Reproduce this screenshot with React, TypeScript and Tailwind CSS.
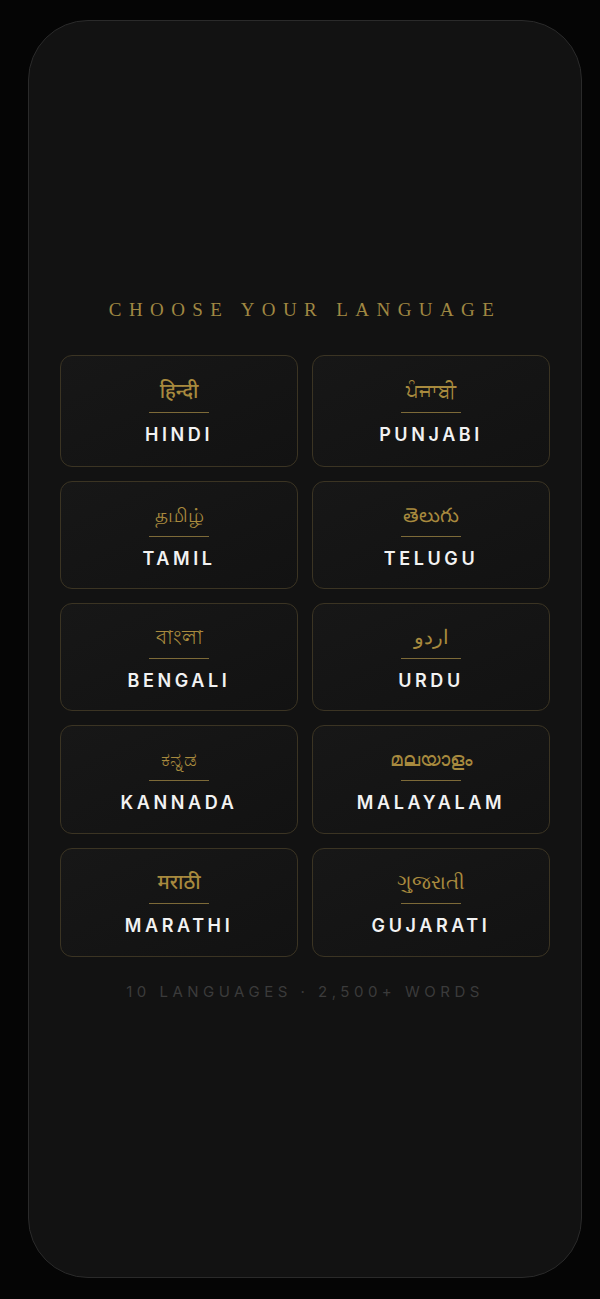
const LANGUAGES = [
  { native: "हिन्दी", name: "HINDI", h: "h-[112px]" },
  { native: "ਪੰਜਾਬੀ", name: "PUNJABI", h: "h-[112px]" },
  { native: "தமிழ்", name: "TAMIL", h: "h-[108px]" },
  { native: "తెలుగు", name: "TELUGU", h: "h-[108px]" },
  { native: "বাংলা", name: "BENGALI", h: "h-[108px]" },
  { native: "اردو", name: "URDU", h: "h-[108px]" },
  { native: "ಕನ್ನಡ", name: "KANNADA", h: "h-[109px]" },
  { native: "മലയാളം", name: "MALAYALAM", h: "h-[109px]" },
  { native: "मराठी", name: "MARATHI", h: "h-[109px]" },
  { native: "ગુજરાતી", name: "GUJARATI", h: "h-[109px]" },
];

function LanguageCard({ native, name, h }: { native: string; name: string; h: string }) {
  return (
    <button
      className={`${h} flex flex-col items-center justify-center rounded-[12px] border border-[#3b3423] bg-gradient-to-br from-[#171717] to-[#121212]`}
    >
      <span className="text-[20px] leading-[26px] font-medium text-[#a88a3e] font-['Noto_Sans',sans-serif]">
        {native}
      </span>
      <span className="mt-[8px] mb-[13px] h-px w-[60px] bg-[#7d6a38]" />
      <span className="text-[18px] leading-none font-semibold tracking-[0.2em] text-[#f2f2f2] font-['Inter',sans-serif]">
        {name}
      </span>
    </button>
  );
}

export default function App() {
  return (
    <div className="min-h-screen bg-[#050505] pl-[28px] py-[20px]">
      <div className="w-[554px] h-[1258px] rounded-[60px] border border-[#2a2a2a] bg-[#121212] flex flex-col items-center justify-center px-[31px]">
        <h1 className="text-[19px] leading-none tracking-[0.39em] text-[#a08842] font-['Liberation_Serif',serif]">
          CHOOSE YOUR LANGUAGE
        </h1>

        <div className="mt-[36px] w-full grid grid-cols-2 gap-[14px]">
          {LANGUAGES.map((l) => (
            <LanguageCard key={l.name} native={l.native} name={l.name} h={l.h} />
          ))}
        </div>

        <p className="mt-[27px] text-[15px] leading-none tracking-[0.3em] text-[#3b3b3b] font-['Inter',sans-serif]">
          10 LANGUAGES · 2,500+ WORDS
        </p>
      </div>
    </div>
  );
}
